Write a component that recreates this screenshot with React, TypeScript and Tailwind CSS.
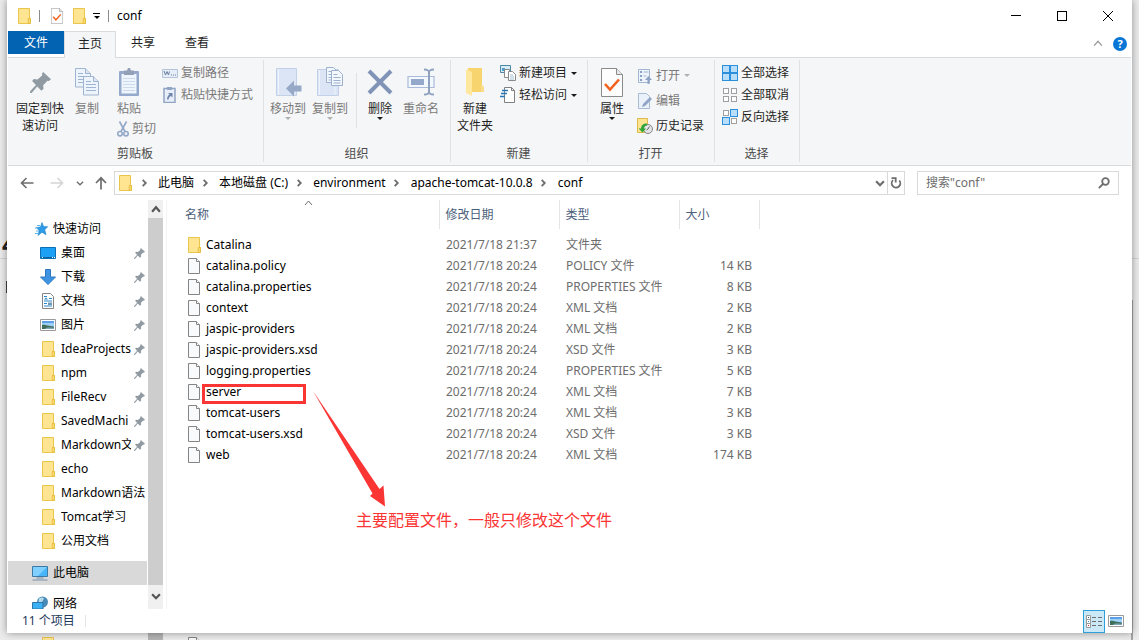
import type { ReactNode } from 'react'

type IconProps = { className?: string }

/* ---------- small glyphs ---------- */

function Chevron({ dir = 'down', className = 'text-[#6d6d6d]', size = 8, weight = 1.5 }: { dir?: 'up' | 'down' | 'right'; className?: string; size?: number; weight?: number }) {
  const d = dir === 'up' ? 'M1 6l3.5-4L8 6' : dir === 'down' ? 'M1 3l3.5 3.5L8 3' : 'M3 1l3.5 3.5L3 8'
  return (
    <svg viewBox="0 0 9 9" width={size} height={size} className={`shrink-0 ${className}`} fill="none" stroke="currentColor" strokeWidth={weight} aria-hidden>
      <path d={d} />
    </svg>
  )
}

function Caret({ className = 'text-[#1a1a1a]' }: IconProps) {
  return (
    <svg viewBox="0 0 6 3" width="6" height="3" className={`shrink-0 ${className}`} fill="currentColor" aria-hidden>
      <path d="M0 0h6L3 3z" />
    </svg>
  )
}

function FolderIcon() {
  return (
    <svg viewBox="0 0 16 16" width="16" height="16" className="shrink-0" aria-hidden>
      <path d="M2.5.5h11v10h.9v5H2.5z" fill="#ffe592" stroke="#e9c54c" />
      <path d="M12.2 10.5h2.3v5h-2.3z" fill="#fbd96b" stroke="#e3b93c" strokeWidth=".8" />
    </svg>
  )
}

function FileIcon() {
  return (
    <svg viewBox="0 0 16 16" width="16" height="16" className="shrink-0" aria-hidden>
      <path d="M2.5.5h8l3 3v12h-11z" fill="#f8fafb" stroke="#858585" />
      <path d="M10.5.5v3h3" fill="#fff" stroke="#858585" />
    </svg>
  )
}

function PinIcon({ size = 12 }: { size?: number }) {
  return (
    <svg viewBox="0 0 20 20" width={size} height={size} className="shrink-0 text-[#8f9aa2]" fill="currentColor" aria-hidden>
      <path d="M12.5 0L20 7l-2 1.500-1.400-.2-4.100 4.200.4 3.500-2 1.800-4-4L1.500 20 0 20l.3-2 5.400-5.600L2 8.600l1.700-1.900 3.500.4L11.800 3l-.4-1.400z" />
    </svg>
  )
}

function CheckDoc({ width, height }: { width: number; height: number }) {
  return (
    <svg viewBox="0 0 22 29" width={width} height={height} className="shrink-0" aria-hidden>
      <path d="M.5.500h15l6 6v22H.5z" fill="#fdfdfd" stroke="#8a8a8a" />
      <path d="M15.500.5v6h6" fill="#e8e8e8" stroke="#8a8a8a" />
      <path d="M4 16l5 5.500 9-10" fill="none" stroke="#f4611e" strokeWidth="2.600" />
    </svg>
  )
}

/* ---------- ribbon icons ---------- */

function CopyIcon() {
  return (
    <svg viewBox="0 0 26 30" width="26" height="30" aria-hidden>
      {[[1, 1], [9, 9]].map(([x, y]) => (
        <g key={x} transform={`translate(${x} ${y})`} stroke="#9fb4d0" fill="none">
          <path d="M.5.500h10l5 5v13.500H.5z" fill="#eef4fc" />
          <path d="M10.500.5v5h5" fill="#dbe6f5" />
          <path d="M3 5.500h5M3 8.500h10M3 11.500h10M3 14.500h10" />
        </g>
      ))}
    </svg>
  )
}

function PasteIcon() {
  return (
    <svg viewBox="0 0 22 30" width="22" height="30" aria-hidden>
      <rect x="1" y="4" width="20" height="25" rx="1" fill="#94a9cb" />
      <path d="M3.500 7h15v19.500h-15z" fill="#eff5fd" />
      <path d="M6 3.500h3L10 1h2l1 2.500h3V8H6z" fill="#93a1b8" />
      <path d="M5 11.500h12M5 14.500h12M5 17.500h12M5 20.500h12M5 23.500h12" stroke="#cddaec" />
    </svg>
  )
}

function ScissorsIcon() {
  return (
    <svg viewBox="0 0 12 16" width="12" height="16" fill="none" stroke="#93a8c8" strokeWidth="1.600" aria-hidden>
      <path d="M2.500.5l5.500 10M9.500.5L4 10.500" />
      <circle cx="3" cy="12.700" r="2.200" />
      <circle cx="9" cy="12.700" r="2.200" />
    </svg>
  )
}

function CopyPathIcon() {
  return (
    <svg viewBox="0 0 16 16" width="16" height="16" aria-hidden>
      <path d="M.5 4.500h15v8H.5z" fill="#e5edf8" stroke="#b4c3da" />
      <path d="M2 6l1.500 4L5 6.500 6.500 10 7.500 6.500" fill="none" stroke="#6b7f9f" />
      <path d="M9 10h1M11 10h1M13 10h1" stroke="#6b7f9f" />
    </svg>
  )
}

function PasteLinkIcon() {
  return (
    <svg viewBox="0 0 16 16" width="16" height="16" aria-hidden>
      <path d="M2 1.500h11v14H2z" fill="#e8effa" stroke="#91a5c4" strokeWidth="1.500" />
      <path d="M5 0h5v3H5z" fill="#91a5c4" />
      <path d="M6 6h4.500v4.500L9 9c-1.500.5-2 1.500-2.500 3.500H5C5 10 6 8.500 7.500 7.500z" fill="#6f86ab" />
    </svg>
  )
}

function MoveToIcon() {
  return (
    <svg viewBox="0 0 28 30" width="28" height="30" aria-hidden>
      <path d="M2.500 1.500h20v27h-20z" fill="#dbe5f5" stroke="#c2d1e8" />
      <path d="M4.500 2v26" stroke="#eef4fc" />
      <path d="M12 21.500l8-8v5h7.500v6H20v5z" fill="#96a9c7" />
    </svg>
  )
}

function CopyToIcon() {
  return (
    <svg viewBox="0 0 28 30" width="28" height="30" aria-hidden>
      <path d="M1.500 2.500h21v26h-21z" fill="#dbe5f5" stroke="#c2d1e8" />
      <path d="M3.500 3v25M19 20v8" stroke="#eef4fc" />
      {[[10, 0], [15, 3]].map(([x, y]) => (
        <g key={x} transform={`translate(${x} ${y})`} stroke="#9db0cd">
          <path d="M.5.500h7l4 4v11H.5z" fill="#f3f8fe" />
          <path d="M2.500 4.500h4M2.500 7.500h7M2.500 10.500h7M2.500 13h7" />
        </g>
      ))}
    </svg>
  )
}

function DeleteIcon() {
  return (
    <svg viewBox="0 0 26 26" width="26" height="26" stroke="#8194b8" strokeWidth="4" aria-hidden>
      <path d="M2 2l22 22M24 2L2 24" />
    </svg>
  )
}

function RenameIcon() {
  return (
    <svg viewBox="0 0 30 28" width="30" height="28" fill="none" aria-hidden>
      <path d="M2 8.500h26v11H2z" fill="#f3f8fe" stroke="#a9bbd8" strokeWidth="1.200" />
      <path d="M5 11h13v6H5z" fill="#93a8cb" />
      <path d="M18 1.500c4 0 5 1 5 3.500v18c0 2.500-1 3.500-5 3.500M28 1.500c-4 0-5 1-5 3.500v18c0 2.500 1 3.500 5 3.500" stroke="#8fa2c0" strokeWidth="2" />
    </svg>
  )
}

function NewFolderIcon() {
  return (
    <svg viewBox="0 0 20 30" width="20" height="30" aria-hidden>
      <path d="M3 1h14v17l2 3v4H3z" fill="#f7d46e" />
      <path d="M1 2l6 3v24l-6-3z" fill="#ffe79e" />
      <path d="M16 17l3 3v5h-3z" fill="#f9dd8a" />
    </svg>
  )
}

function NewItemIcon() {
  return (
    <svg viewBox="0 0 16 16" width="16" height="16" aria-hidden>
      <path d="M.5.500h10v7H.5z" fill="#d7edf8" stroke="#4e86a6" />
      <path d="M2 3h3v3H2z" fill="#4e9cc9" />
      <path d="M4.500 4.500h5v8h-5z" fill="#fff" stroke="#8a8a8a" />
      <path d="M8.500 6.500h4l3 3v6h-7z" fill="#fff" stroke="#8a8a8a" />
      <path d="M10 10h3M10 12h4M10 14h4" stroke="#8ab0cc" strokeWidth=".8" />
    </svg>
  )
}

function EasyAccessIcon() {
  return (
    <svg viewBox="0 0 16 16" width="16" height="16" aria-hidden>
      <path d="M4.500.500h7l3 3v12h-10z" fill="#fff" stroke="#808080" />
      <path d="M11.500.5v3h3" fill="none" stroke="#808080" />
      <path d="M2 3.500h6M1 6.500h6M0 9.500h5" stroke="#2a77b5" strokeWidth="1.300" />
    </svg>
  )
}

function OpenIcon() {
  return (
    <svg viewBox="0 0 16 16" width="16" height="16" aria-hidden>
      <path d="M1.500 1.500h11v13h-11z" fill="#edf3fb" stroke="#a4b5cf" />
      <path d="M3 3h2v2H3zM3 7h2v2H3zM3 11h2v2H3z" fill="#8aa0c2" />
      <path d="M6.500 4h5M6.500 8h3" stroke="#a4b5cf" />
      <path d="M10.500 16v-4H8l3.500-4 3.500 4h-2.500v4z" fill="#8ea3c4" />
    </svg>
  )
}

function EditIcon() {
  return (
    <svg viewBox="0 0 16 16" width="16" height="16" aria-hidden>
      <path d="M1.500.500h8l3 3v12h-11z" fill="#eaf1fb" stroke="#a9bad3" />
      <path d="M5 14l1-3 7-7 2 2-7 7z" fill="#8fa5c8" />
    </svg>
  )
}

function HistoryIcon() {
  return (
    <svg viewBox="0 0 16 16" width="16" height="16" aria-hidden>
      <path d="M.5.500h10v10h1v4H.5z" fill="#ffe592" stroke="#dcb94a" />
      <circle cx="11" cy="11" r="4.500" fill="#e4e4e4" stroke="#888" />
      <path d="M11 11l1.500-2.500M11 11l-1.500 1" fill="none" stroke="#666" />
      <path d="M10 5.500C6 5.500 4 7.500 4 10.500H1.500l4 4 3.500-4H7C7 8.500 8 7.500 10 7.500z" fill="#2fa53a" />
    </svg>
  )
}

function TilesIcon({ on }: { on: boolean[] }) {
  return (
    <svg viewBox="0 0 16 16" width="16" height="16" aria-hidden>
      {on.map((active, i) => {
        const x = (i % 2) * 8
        const y = i > 1 ? 8 : 0
        return active
          ? <rect key={i} x={x + 0.5} y={y + 0.5} width="7" height="7" fill="#b8defa" stroke="#2c8fdc" />
          : <rect key={i} x={x + 1.5} y={y + 1.5} width="5" height="5" fill="#fff" stroke="#a0a0a0" />
      })}
    </svg>
  )
}

/* ---------- navigation pane icons ---------- */

function StarIcon() {
  return (
    <svg viewBox="0 0 16 16" width="16" height="16" className="shrink-0" aria-hidden>
      <path d="M10 1.500l1.500 4 4.200.300-3 2.900 1.300 5-4-2.500L6 14.500l1.200-5L4.500 6.500 8.500 6z" fill="#2d9be8" stroke="#1b7fc8" strokeWidth=".6" />
      <path d="M5 4.500h3M3 7h3M4 10h3M3 12.500h3" stroke="#5db5ee" />
    </svg>
  )
}

function DesktopIcon() {
  return (
    <svg viewBox="0 0 16 16" width="16" height="16" className="shrink-0" aria-hidden>
      <path d="M.5 2.500h15v11H.5z" fill="#1ca0f5" stroke="#0b6fb5" />
      <path d="M1 12.500h14" stroke="#0b5f9e" />
      <path d="M2 12.500h1M12 12.500h1M14 12.500h1" stroke="#fff" />
    </svg>
  )
}

function DownloadIcon() {
  return (
    <svg viewBox="0 0 16 16" width="16" height="16" className="shrink-0" aria-hidden>
      <path d="M5.500.500h5v7.500h5L8 15.500.500 8h5z" fill="#3e94e0" stroke="#2a78c2" />
    </svg>
  )
}

function DocumentsIcon() {
  return (
    <svg viewBox="0 0 16 16" width="16" height="16" className="shrink-0" aria-hidden>
      <path d="M2.500.500h8l3 3v12h-11z" fill="#fff" stroke="#848484" />
      <path d="M4 3.500h3M9 5.500h3M4 8h8M4 10.500h3M9 10.500h3M4 13h8" stroke="#2d87c8" />
      <path d="M4 6.500l2-2 2 2z" fill="#2d87c8" />
      <path d="M8 9.500h4v2.500H8z" fill="#6f97b1" />
    </svg>
  )
}

function PicturesIcon() {
  return (
    <svg viewBox="0 0 16 16" width="16" height="16" className="shrink-0" aria-hidden>
      <path d="M.5 2.500h15v11H.5z" fill="#fff" stroke="#9a9a9a" />
      <path d="M2 4h12v8H2z" fill="#9ed0f5" />
      <path d="M2 4h12v2H2z" fill="#5b9fe8" />
      <path d="M2 8c3-1 5 1 12 1.500V12H2z" fill="#3f6d5c" />
      <path d="M6 11c3-1 6 0 8-.5V12H5z" fill="#7fa7bb" />
    </svg>
  )
}

function ThisPcIcon() {
  return (
    <svg viewBox="0 0 16 16" width="16" height="16" className="shrink-0" aria-hidden>
      <path d="M.5 1.500h15v10H.5z" fill="#47b5f8" stroke="#3c7ba6" />
      <path d="M1 2h14L6 11H1z" fill="#7fd0ff" />
      <path d="M4.500 13h7M.5 15h15" stroke="#7692ad" />
    </svg>
  )
}

function NetworkIcon() {
  return (
    <svg viewBox="0 0 16 16" width="16" height="16" className="shrink-0" aria-hidden>
      <circle cx="10.500" cy="6" r="5.500" fill="#4a8cb5" />
      <path d="M7 2.500c2-1.500 4-1 5 0L10 6 6.500 7z" fill="#b7dbee" />
      <path d="M.5 6.500h10.500v6.500H.500z" fill="#3cb0f5" stroke="#2c76a8" />
      <path d="M3 15.500h6" stroke="#7692ad" />
    </svg>
  )
}

/* ---------- ribbon building blocks ---------- */

function BigButton({ icon, lines, width, muted, caret }: { icon: ReactNode; lines: string[]; width: string; muted?: boolean; caret?: boolean }) {
  return (
    <button className={`flex shrink-0 flex-col items-center ${width} ${muted ? 'text-[#7a7a7a]' : 'text-[#1f1f1f]'}`}>
      <span className="mb-0.5 flex h-8 items-center justify-center">{icon}</span>
      {lines.map(l => <span key={l} className="leading-[17px] whitespace-nowrap">{l}</span>)}
      {caret && <Caret className={muted ? 'text-[#b0b0b0]' : 'text-[#1a1a1a]'} />}
    </button>
  )
}

function SmallButton({ icon, label, muted, caret, tall }: { icon: ReactNode; label: string; muted?: boolean; caret?: boolean; tall?: boolean }) {
  return (
    <button className={`flex items-center gap-[3px] whitespace-nowrap ${tall ? 'h-[25px]' : 'h-[22px]'} ${muted ? 'text-[#7a7a7a]' : 'text-[#1f1f1f]'}`}>
      {icon}
      <span>{label}</span>
      {caret && <span className="ml-px"><Caret className={muted ? 'text-[#b0b0b0]' : 'text-[#1a1a1a]'} /></span>}
    </button>
  )
}

function Group({ label, width, children }: { label: string; width: string; children: ReactNode }) {
  return (
    <section className={`relative flex shrink-0 flex-col ${width}`}>
      <div className="flex flex-1">{children}</div>
      <div className="mb-0.5 h-[18px] pr-0.5 text-center leading-[18px] text-[#4a4a4a]">{label}</div>
      <span className="absolute top-0.5 right-0 bottom-[3px] w-px bg-[#e0e1e3]" />
    </section>
  )
}

/* ---------- data ---------- */

const crumbs = ['此电脑', '本地磁盘 (C:)', 'environment', 'apache-tomcat-10.0.8', 'conf']

const places: { name: string; icon: ReactNode; pinned?: boolean }[] = [
  { name: '桌面', icon: <DesktopIcon />, pinned: true },
  { name: '下载', icon: <DownloadIcon />, pinned: true },
  { name: '文档', icon: <DocumentsIcon />, pinned: true },
  { name: '图片', icon: <PicturesIcon />, pinned: true },
  { name: 'IdeaProjects', icon: <FolderIcon />, pinned: true },
  { name: 'npm', icon: <FolderIcon />, pinned: true },
  { name: 'FileRecv', icon: <FolderIcon />, pinned: true },
  { name: 'SavedMachi', icon: <FolderIcon />, pinned: true },
  { name: 'Markdown文', icon: <FolderIcon />, pinned: true },
  { name: 'echo', icon: <FolderIcon /> },
  { name: 'Markdown语法', icon: <FolderIcon /> },
  { name: 'Tomcat学习', icon: <FolderIcon /> },
  { name: '公用文档', icon: <FolderIcon /> },
]

const files = [
  { name: 'Catalina', date: '2021/7/18 21:37', type: '文件夹', size: '' },
  { name: 'catalina.policy', date: '2021/7/18 20:24', type: 'POLICY 文件', size: '14 KB' },
  { name: 'catalina.properties', date: '2021/7/18 20:24', type: 'PROPERTIES 文件', size: '8 KB' },
  { name: 'context', date: '2021/7/18 20:24', type: 'XML 文档', size: '2 KB' },
  { name: 'jaspic-providers', date: '2021/7/18 20:24', type: 'XML 文档', size: '2 KB' },
  { name: 'jaspic-providers.xsd', date: '2021/7/18 20:24', type: 'XSD 文件', size: '3 KB' },
  { name: 'logging.properties', date: '2021/7/18 20:24', type: 'PROPERTIES 文件', size: '5 KB' },
  { name: 'server', date: '2021/7/18 20:24', type: 'XML 文档', size: '7 KB' },
  { name: 'tomcat-users', date: '2021/7/18 20:24', type: 'XML 文档', size: '3 KB' },
  { name: 'tomcat-users.xsd', date: '2021/7/18 20:24', type: 'XSD 文件', size: '3 KB' },
  { name: 'web', date: '2021/7/18 20:24', type: 'XML 文档', size: '174 KB' },
]

/* ---------- window sections ---------- */

function TitleBar() {
  return (
    <header className="flex h-[31px] shrink-0 items-center pl-2">
      <FolderIcon />
      <span className="ml-[7px] h-3 w-px bg-[#8a8a8a]" />
      <button className="ml-[11px]" aria-label="属性"><CheckDoc width={12} height={16} /></button>
      <button className="ml-2" aria-label="新建文件夹"><FolderIcon /></button>
      <button className="ml-1.5 flex flex-col items-center gap-0.5" aria-label="自定义快速访问工具栏">
        <span className="h-px w-[7px] bg-black" />
        <Caret className="text-black" />
      </button>
      <span className="ml-2 h-3 w-px bg-[#8a8a8a]" />
      <h1 className="ml-2">conf</h1>
      <div className="ml-auto flex h-full">
        <button className="flex w-[46px] items-center justify-center" aria-label="最小化"><span className="h-px w-2.5 bg-black" /></button>
        <button className="flex w-[46px] items-center justify-center" aria-label="最大化"><span className="size-2.5 border border-black" /></button>
        <button className="flex w-[46px] items-center justify-center" aria-label="关闭">
          <svg viewBox="0 0 10 10" width="10" height="10" stroke="#000" aria-hidden><path d="M0 0l10 10M10 0L0 10" /></svg>
        </button>
      </div>
    </header>
  )
}

function Tabs() {
  return (
    <nav className="flex h-[27px] shrink-0 border-b border-[#dadbdc] text-[#1f1f1f]">
      <button className="h-[23px] w-14 bg-[#0163b1] text-white">文件</button>
      <button className="-mb-px w-[52px] border-x border-t border-[#dadbdc] bg-[#f5f6f7] pb-0.5">主页</button>
      <button className="w-[54px] pb-0.5">共享</button>
      <button className="w-[54px] pb-0.5">查看</button>
      <div className="ml-auto flex items-center gap-2.5 pr-1">
        <Chevron dir="up" size={10} weight={1.2} className="text-[#9a9a9a]" />
        <button className="flex size-3.5 items-center justify-center rounded-full bg-[#0a76d6] text-[11px] font-bold text-white" aria-label="帮助">?</button>
      </div>
    </nav>
  )
}

function Ribbon() {
  return (
    <div className="flex h-[108px] shrink-0 overflow-hidden border-b border-[#dadbdc] bg-[#f5f6f7]">
      <Group label="剪贴板" width="w-64">
        <div className="flex pt-2">
          <BigButton width="w-16" icon={<PinIcon size={21} />} lines={['固定到快', '速访问']} />
          <BigButton width="w-[30px]" icon={<CopyIcon />} lines={['复制']} muted />
          <div className="flex w-[54px] flex-col items-center">
            <BigButton width="w-12" icon={<PasteIcon />} lines={['粘贴']} muted />
            <div className="self-end pt-px"><SmallButton icon={<ScissorsIcon />} label="剪切" muted /></div>
          </div>
        </div>
        <div className="pt-1 pl-1.5">
          <SmallButton icon={<CopyPathIcon />} label="复制路径" muted />
          <SmallButton icon={<PasteLinkIcon />} label="粘贴快捷方式" muted />
        </div>
      </Group>
      <Group label="组织" width="w-[187px]">
        <div className="flex pt-2">
          <BigButton width="w-12" icon={<MoveToIcon />} lines={['移动到']} muted caret />
          <BigButton width="w-9" icon={<CopyToIcon />} lines={['复制到']} muted caret />
          <span className="mt-[7px] ml-2 h-[55px] w-px bg-[#e0e1e3]" />
          <BigButton width="w-[46px]" icon={<DeleteIcon />} lines={['删除']} caret />
          <BigButton width="w-9" icon={<RenameIcon />} lines={['重命名']} muted />
        </div>
      </Group>
      <Group label="新建" width="w-[137px]">
        <div className="pt-2">
          <BigButton width="w-12" icon={<NewFolderIcon />} lines={['新建', '文件夹']} />
        </div>
        <div className="pt-1 pl-px">
          <SmallButton icon={<NewItemIcon />} label="新建项目" caret />
          <SmallButton icon={<EasyAccessIcon />} label="轻松访问" caret />
        </div>
      </Group>
      <Group label="打开" width="w-[127px]">
        <div className="pt-2">
          <BigButton width="w-12" icon={<CheckDoc width={22} height={29} />} lines={['属性']} caret />
        </div>
        <div className="pt-[5px] pl-px">
          <SmallButton icon={<OpenIcon />} label="打开" muted caret tall />
          <SmallButton icon={<EditIcon />} label="编辑" muted tall />
          <SmallButton icon={<HistoryIcon />} label="历史记录" tall />
        </div>
      </Group>
      <Group label="选择" width="w-[85px]">
        <div className="pt-1 pl-[7px]">
          <SmallButton icon={<TilesIcon on={[true, true, true, true]} />} label="全部选择" />
          <SmallButton icon={<TilesIcon on={[false, false, false, false]} />} label="全部取消" />
          <SmallButton icon={<TilesIcon on={[false, true, true, false]} />} label="反向选择" />
        </div>
      </Group>
    </div>
  )
}

function AddressBar() {
  return (
    <div className="flex h-[34px] shrink-0 items-center pr-3">
      <button className="ml-3" aria-label="后退">
        <svg viewBox="0 0 14 12" width="14" height="12" fill="none" stroke="#6d6d6d" strokeWidth="1.600" aria-hidden><path d="M13.500 6H2M6.500 1L1.500 6l5 5" /></svg>
      </button>
      <button className="ml-4" aria-label="前进">
        <svg viewBox="0 0 14 12" width="14" height="12" fill="none" stroke="#d5d5d5" strokeWidth="1.600" aria-hidden><path d="M.5 6H12M7.500 1l5 5-5 5" /></svg>
      </button>
      <button className="ml-3" aria-label="最近浏览的位置"><Chevron size={8} /></button>
      <button className="ml-[11px]" aria-label="上移">
        <svg viewBox="0 0 12 14" width="12" height="14" fill="none" stroke="#6d6d6d" strokeWidth="1.700" aria-hidden><path d="M6 13.500V2M1 7l5-5.200L11 7" /></svg>
      </button>
      <div className="ml-[7px] flex h-6 min-w-0 flex-1 items-center border border-[#d9d9d9] pl-0.5">
        <FolderIcon />
        {crumbs.map(c => (
          <div key={c} className="flex items-center">
            <span className="flex w-[25px] justify-center pr-1"><Chevron dir="right" size={8} weight={2} /></span>
            <button className="whitespace-nowrap">{c}</button>
          </div>
        ))}
        <button className="mr-0.5 ml-auto" aria-label="以前的位置"><Chevron size={10} weight={2} /></button>
        <button className="flex h-full w-[17px] items-center justify-center border-l border-[#d9d9d9]" aria-label="刷新">
          <svg viewBox="0 0 12 12" width="12" height="12" fill="none" stroke="#6d6d6d" strokeWidth="1.800" aria-hidden>
            <path d="M9.300 3.500A4.300 4.300 0 1 1 3 3.200" />
            <path d="M1.500 1.200h4.200v4.200" />
          </svg>
        </button>
      </div>
      <label className="ml-3 flex h-6 w-[202px] items-center border border-[#d9d9d9] px-2">
        <input type="search" aria-label="搜索" placeholder={'搜索"conf"'} className="min-w-0 flex-1 outline-none placeholder:text-[#6d6d6d]" />
        <svg viewBox="0 0 12 12" width="12" height="12" fill="none" stroke="#6d6d6d" strokeWidth="1.800" aria-hidden>
          <circle cx="7.500" cy="4.500" r="3.300" />
          <path d="M5 7L.8 11.200" />
        </svg>
      </label>
    </div>
  )
}

function NavPane() {
  return (
    <aside className="flex shrink-0 overflow-hidden">
      <div className="w-[140px] overflow-hidden pt-[17px] pr-px">
        <a href="#quick" className="flex h-6 items-center gap-[5px] pl-6"><StarIcon />快速访问</a>
        {places.map(p => (
          <a key={p.name} href="#place" className="flex h-6 items-center gap-[5px] pl-8">
            {p.icon}
            <span className="flex min-w-0 flex-1">
              <span className="min-w-0 flex-1 overflow-hidden whitespace-nowrap">{p.name}</span>
              {p.pinned && <span className="flex w-4 shrink-0 items-center justify-center"><PinIcon size={11} /></span>}
            </span>
          </a>
        ))}
        <a href="#pc" className="mt-2 flex h-6 items-center gap-[5px] bg-[#d9d9d9] pl-6"><ThisPcIcon />此电脑</a>
        <a href="#network" className="mt-[7px] flex h-6 items-center gap-[5px] pl-6"><NetworkIcon />网络</a>
      </div>
      <div className="flex w-[15px] flex-col bg-[#f0f0f0]">
        <span className="flex h-[18px] items-center justify-center pt-0.5"><Chevron dir="up" size={10} weight={2} className="text-[#555]" /></span>
        <span className="flex-1 bg-[#cdcdcd]" />
        <span className="flex h-6 items-center justify-center pt-1.5 pb-2"><Chevron size={10} weight={2} className="text-[#555]" /></span>
      </div>
    </aside>
  )
}

function FileList() {
  return (
    <main className="relative ml-[3px] min-w-0 flex-1 border-l border-[#f3f3f3]">
      <table className="w-[592px] table-fixed text-left">
        <colgroup>
          <col className="w-[272px]" />
          <col className="w-[120px]" />
          <col className="w-[120px]" />
          <col className="w-20" />
        </colgroup>
        <thead className="text-[#4c607a]">
          <tr className="h-[29px]">
            <th className="relative border-r border-[#e5e5e5] pl-[18px] font-normal">
              名称
              <span className="absolute -top-px left-0 flex w-full justify-center pl-3"><Chevron dir="up" size={9} weight={1} /></span>
            </th>
            <th className="border-r border-[#e5e5e5] pl-1.5 font-normal">修改日期</th>
            <th className="border-r border-[#e5e5e5] pl-1.5 font-normal">类型</th>
            <th className="border-r border-[#e5e5e5] pl-1.5 font-normal">大小</th>
          </tr>
        </thead>
        <tbody className="text-[#6d6d6d] before:block before:h-[5px]">
          {files.map(f => (
            <tr key={f.name} className="h-[21px]">
              <td className="p-0 pl-[19px] text-black">
                <div className="flex items-center">
                  {f.type === '文件夹' ? <FolderIcon /> : <FileIcon />}
                  <span className="relative ml-1">
                    {f.name}
                    {/* highlighted config file */}
                    {f.name === 'server' && <span className="absolute top-0 -left-1 h-5 w-[104px] border-3 border-[#fa3534]" />}
                  </span>
                </div>
              </td>
              <td className="p-0 pl-[7px]">{f.date}</td>
              <td className="p-0 pl-[7px]">{f.type}</td>
              <td className="p-0 pr-[7px] text-right">{f.size}</td>
            </tr>
          ))}
        </tbody>
      </table>
      <svg viewBox="0 0 74 118" width="74" height="118" className="absolute top-[191px] left-[146px]" fill="#fa3534" aria-hidden>
        <path d="M0 0l66.500 98 4-3.500 1.500 21-15-10.500 2.500-2.500z" />
      </svg>
      <p className="absolute top-[308px] left-[189px] text-base leading-6 whitespace-nowrap text-[#fa3534]">主要配置文件，一般只修改这个文件</p>
    </main>
  )
}

function StatusBar() {
  return (
    <footer className="flex h-6 shrink-0 items-center pr-1 pl-3.5 text-[#1e395b]">
      <span>11 个项目</span>
      <span className="ml-2.5 h-3 w-px bg-[#e5e5e5]" />
      <button className="ml-auto flex h-[23px] w-[22px] items-center justify-center border border-[#2e9fd8] bg-[#cbe8f6]" aria-label="详细信息">
        <svg viewBox="0 0 16 13" width="16" height="13" fill="none" aria-hidden>
          <path d="M.5.500h4v12h-4zM.5 4.500h4M.5 8.500h4" fill="#fff" stroke="#9a9a9a" />
          <path d="M6 2.500h4M12 2.500h4M6 6.500h4M12 6.500h4M6 10.500h4M12 10.500h4" stroke="#6d6d6d" />
          <path d="M2 2.500h1" stroke="#444" />
          <path d="M2 6.500h1" stroke="#2c8fdc" />
          <path d="M2 10.500h1" stroke="#d22" />
        </svg>
      </button>
      <button className="flex w-[22px] items-center justify-center" aria-label="大缩略图"><PicturesIcon /></button>
    </footer>
  )
}

/* slivers of the page and the second window that show around the edges */
function Behind() {
  return (
    <div className="absolute inset-0 overflow-hidden bg-[#ececec]" aria-hidden>
      <span className="absolute top-[232px] left-0.5 text-2xl leading-6 font-bold text-[#222]">4</span>
      <span className="absolute top-[258px] left-0 h-px w-full bg-[#d5d5d5]" />
      <span className="absolute top-[281px] left-1.5 h-3 w-0.5 bg-[#444]" />
      <span className="absolute top-[300px] right-1.5 bottom-0 w-0.5 bg-[#a5a5a5]" />
      <span className="absolute bottom-0 left-[148px] h-[7px] w-[15px] bg-[#b5b5b5]" />
      <span className="absolute -bottom-[13px] left-10"><FolderIcon /></span>
      <span className="absolute -bottom-[13px] left-[186px]"><FileIcon /></span>
    </div>
  )
}

export default function App() {
  return (
    <div className="relative h-screen overflow-hidden px-[7px] pb-[7px] font-['Noto_Sans','Noto_Sans_CJK_SC',sans-serif] text-xs text-black">
      <Behind />
      <div className="relative flex h-full flex-col bg-white px-px shadow-[0_0_8px_rgba(0,0,0,0.4)]">
        <TitleBar />
        <Tabs />
        <Ribbon />
        <AddressBar />
        <div className="flex min-h-0 flex-1">
          <NavPane />
          <FileList />
        </div>
        <StatusBar />
      </div>
    </div>
  )
}
